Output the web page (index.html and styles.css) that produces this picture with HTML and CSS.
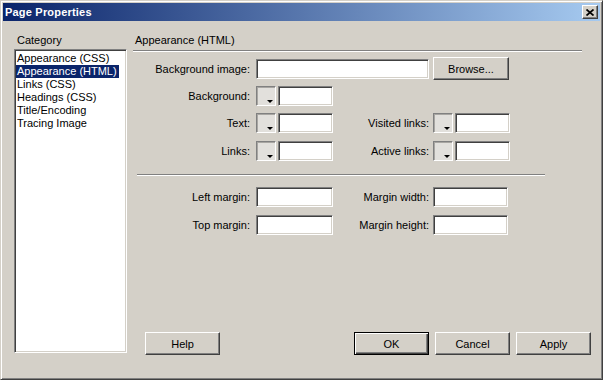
FILE: index.html
```html
<!DOCTYPE html>
<html lang="en">
<head>
    <meta charset="UTF-8">
    <title>Page Properties</title>
    <link rel="stylesheet" href="styles.css">
</head>
<body>
<div class="window">
    <!-- Title bar -->
    <div class="titlebar">
        <span class="title">Page Properties</span>
        <button class="close-btn" type="button">
            <svg width="8" height="7" viewBox="0 0 8 7">
                <path d="M0.5 0.5L7.5 6.5M7.5 0.5L0.5 6.5" stroke="#000" stroke-width="1.7" fill="none"/>
            </svg>
        </button>
    </div>

    <div class="dialog-body">
        <!-- Category list -->
        <div class="category">
            <div class="cat-label">Category</div>
            <div class="listbox">
                <div class="list-item">Appearance (CSS)</div>
                <div class="list-item selected">Appearance (HTML)</div>
                <div class="list-item">Links (CSS)</div>
                <div class="list-item">Headings (CSS)</div>
                <div class="list-item">Title/Encoding</div>
                <div class="list-item">Tracing Image</div>
            </div>
        </div>

        <!-- Properties panel -->
        <div class="panel">
            <div class="panel-title">Appearance (HTML)</div>
            <div class="separator"></div>

            <div class="row row-first">
                <label class="lbl">Background image:</label>
                <input class="field field-long" type="text">
                <button class="btn browse-btn" type="button">Browse...</button>
            </div>

            <div class="row row-bg">
                <label class="lbl">Background:</label>
                <div class="color-pick">
                    <span class="swatch"></span>
                    <input class="field field-color" type="text">
                </div>
            </div>

            <div class="row row-text">
                <label class="lbl">Text:</label>
                <div class="color-pick">
                    <span class="swatch"></span>
                    <input class="field field-color" type="text">
                </div>
                <label class="lbl2">Visited links:</label>
                <div class="color-pick">
                    <span class="swatch"></span>
                    <input class="field field-color" type="text">
                </div>
            </div>

            <div class="row row-links">
                <label class="lbl">Links:</label>
                <div class="color-pick">
                    <span class="swatch"></span>
                    <input class="field field-color" type="text">
                </div>
                <label class="lbl2">Active links:</label>
                <div class="color-pick">
                    <span class="swatch"></span>
                    <input class="field field-color" type="text">
                </div>
            </div>

            <div class="separator separator-short"></div>

            <div class="row row-margin1">
                <label class="lbl">Left margin:</label>
                <input class="field field-mid" type="text">
                <label class="lbl2">Margin width:</label>
                <input class="field field-mid2" type="text">
            </div>

            <div class="row row-margin2">
                <label class="lbl">Top margin:</label>
                <input class="field field-mid" type="text">
                <label class="lbl2">Margin height:</label>
                <input class="field field-mid2" type="text">
            </div>

            <!-- Dialog buttons -->
            <div class="buttons">
                <button class="btn" type="button">Help</button>
                <button class="btn default ok-btn" type="button">OK</button>
                <button class="btn" type="button">Cancel</button>
                <button class="btn" type="button">Apply</button>
            </div>
        </div>
    </div>
</div>
</body>
</html>
```

FILE: styles.css
```css
body {
    margin: 0;
    font-family: "Liberation Sans", Arial, sans-serif;
    font-size: 11px;
    color: #000;
    background: #d4d0c8;
}
.window {
    width: 603px;
    height: 380px;
    box-sizing: border-box;
    padding: 2px;
    background: #d4d0c8;
    border: 1px solid;
    border-color: #d4d0c8 #404040 #404040 #d4d0c8;
    box-shadow: inset 1px 1px #fff, inset -1px -1px #808080;
    display: flex;
    flex-direction: column;
}

/* Title bar */
.titlebar {
    height: 18px;
    display: flex;
    align-items: center;
    justify-content: space-between;
    padding: 0 2px 0 2px;
    background: linear-gradient(to right, #0a246a, #a6caf0);
}
.title {
    color: #fff;
    font-weight: bold;
    font-size: 11px;
    letter-spacing: 0.2px;
}
.close-btn {
    width: 16px;
    height: 14px;
    padding: 0;
    margin: 0;
    display: flex;
    align-items: center;
    justify-content: center;
    background: #d4d0c8;
    border: 1px solid;
    border-color: #fff #404040 #404040 #fff;
    box-shadow: inset -1px -1px #808080;
}

/* Body */
.dialog-body {
    flex: 1;
    display: flex;
    padding: 13px 9px 23px 11px;
}
.category {
    width: 113px;
    display: flex;
    flex-direction: column;
}
.cat-label {
    line-height: 13px;
    padding-left: 3px;
    margin-bottom: 2px;
}
.listbox {
    height: 304px;
    box-sizing: border-box;
    background: #fff;
    border: 1px solid;
    border-color: #808080 #fff #fff #808080;
    box-shadow: inset 1px 1px #404040, inset -1px -1px #d4d0c8;
    padding: 2px 0 0 1px;
}
.list-item {
    width: fit-content;
    line-height: 13px;
    padding: 0 2px 0 1px;
    white-space: nowrap;
}
.list-item.selected {
    background: #0a246a;
    color: #fff;
}

/* Panel */
.panel {
    flex: 1;
    margin-left: 6px;
    display: flex;
    flex-direction: column;
}
.panel-title {
    line-height: 13px;
    padding-left: 2px;
    margin-bottom: 3px;
}
.separator {
    width: 449px;
    border-top: 1px solid #808080;
    border-bottom: 1px solid #fff;
}
.separator-short {
    width: 408px;
    margin: 13px 0 0 4px;
}
.row {
    display: flex;
    align-items: center;
    height: 20px;
}
.row-first { height: 23px; margin-top: 5px; }
.row-bg { margin-top: 6px; }
.row-text { margin-top: 7px; }
.row-links { margin-top: 8px; }
.row-margin1 { margin-top: 11px; }
.row-margin2 { margin-top: 8px; }

.lbl {
    width: 117px;
    margin-right: 6px;
    text-align: right;
    white-space: nowrap;
}
.lbl2 {
    width: 96px;
    margin-right: 4px;
    text-align: right;
    white-space: nowrap;
}

/* Sunken text field */
.field {
    height: 20px;
    box-sizing: border-box;
    margin: 0;
    padding: 0 3px;
    background: #fff;
    border: 1px solid;
    border-color: #808080 #fff #fff #808080;
    box-shadow: inset 1px 1px #404040, inset -1px -1px #d4d0c8;
    font: inherit;
    outline: none;
}
.field-long { width: 173px; }
.field-color { width: 55px; }
.field-mid { width: 77px; }
.field-mid2 { width: 75px; }

.color-pick {
    display: flex;
    gap: 2px;
    width: 77px;
}
.swatch {
    position: relative;
    width: 20px;
    height: 20px;
    box-sizing: border-box;
    background: #e2e0dc;
    border: 1px solid;
    border-color: #808080 #fff #fff #808080;
    box-shadow: inset 1px 1px #a8a6a2;
}
.swatch::after {
    content: "";
    position: absolute;
    right: 2px;
    bottom: 2px;
    border-left: 3px solid transparent;
    border-right: 3px solid transparent;
    border-top: 3px solid #000;
}

/* Raised buttons */
.btn {
    width: 75px;
    height: 23px;
    box-sizing: border-box;
    margin: 0;
    padding: 0;
    background: #d4d0c8;
    border: 1px solid;
    border-color: #fff #404040 #404040 #fff;
    box-shadow: inset -1px -1px #808080;
    font: inherit;
    color: #000;
}
.browse-btn {
    width: 76px;
    margin-left: 4px;
}
.btn.default {
    border-color: #000;
    box-shadow: inset 1px 1px #fff, inset -1px -1px #404040, inset -2px -2px #808080;
}
.buttons {
    margin-top: auto;
    margin-bottom: -1px;
    display: flex;
    gap: 6px;
    padding-left: 12px;
}
.ok-btn {
    margin-left: auto;
}
```
